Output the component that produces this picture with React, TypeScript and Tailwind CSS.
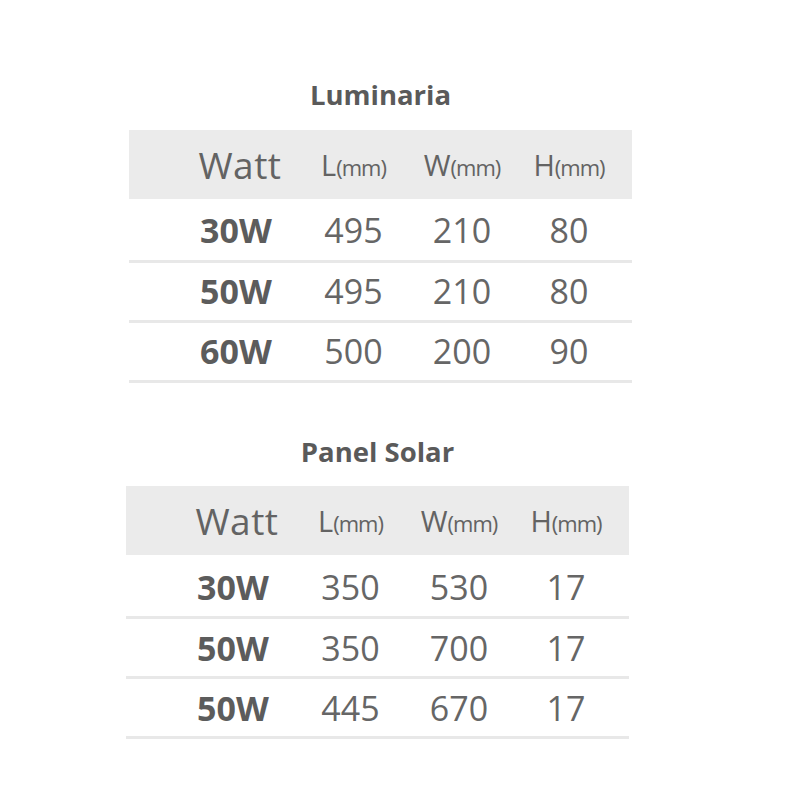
import React from "react";

type Row = [string, string, string, string];

const Unit = ({ letter }: { letter: string }) => (
  <span className="whitespace-nowrap">
    <span className="text-[29px]">{letter}</span>
    <span className="text-[22px] tracking-[-1px]">(mm)</span>
  </span>
);

const Spec = ({ title, rows, left }: { title: string; rows: Row[]; left: string }) => (
  <div className={`flex w-[503px] flex-col items-center ${left}`}>
    <div className="text-[27.5px] font-bold leading-none text-[#5a5a5a]">{title}</div>
    <div className="mt-[21px] w-[503px]">
      <div className="grid h-[69px] grid-cols-[116px_111px_106px_108px] items-center bg-[#ebebeb] pl-[53px] text-[#636363]">
        <div className="text-center text-[37px] leading-none tracking-[0.5px]">Watt</div>
        <div className="text-center leading-none"><Unit letter="L" /></div>
        <div className="text-center leading-none"><Unit letter="W" /></div>
        <div className="text-center leading-none"><Unit letter="H" /></div>
      </div>
      {rows.map((r, i) => (
        <div
          key={i}
          className={`grid ${i === 0 ? "h-[64px] pt-[2px]" : "h-[60px]"} grid-cols-[116px_111px_106px_108px] items-center border-b-[3px] border-[#e8e8e8] pl-[53px] text-[34px] leading-none text-[#666666]`}
        >
          <div className="pr-[8px] text-center font-bold text-[#5c5c5c]">{r[0]}</div>
          <div className="text-center">{r[1]}</div>
          <div className="text-center">{r[2]}</div>
          <div className="text-center">{r[3]}</div>
        </div>
      ))}
    </div>
  </div>
);

export default function App() {
  return (
    <div className="h-[800px] w-[800px] bg-white pt-[81px] font-['Open_Sans',sans-serif]">
      <Spec
        title="Luminaria"
        left="ml-[129px]"
        rows={[
          ["30W", "495", "210", "80"],
          ["50W", "495", "210", "80"],
          ["60W", "500", "200", "90"],
        ]}
      />
      <div className="h-[55px]" />
      <Spec
        title="Panel Solar"
        left="ml-[126px]"
        rows={[
          ["30W", "350", "530", "17"],
          ["50W", "350", "700", "17"],
          ["50W", "445", "670", "17"],
        ]}
      />
    </div>
  );
}
